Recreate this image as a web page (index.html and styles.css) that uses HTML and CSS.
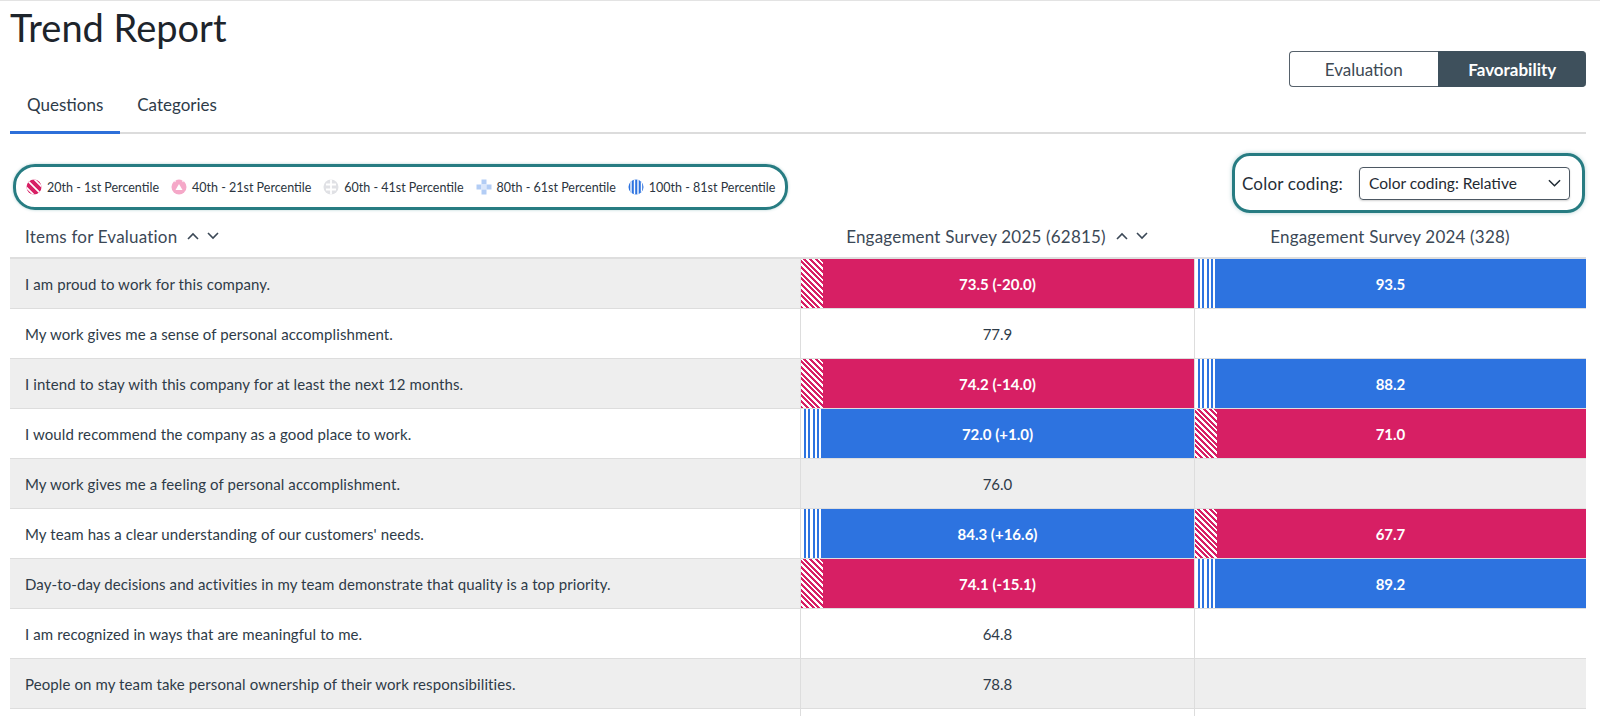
FILE: index.html
```html
<!DOCTYPE html>
<html lang="en">
<head>
<meta charset="utf-8">
<title>Trend Report</title>
<link rel="stylesheet" href="styles.css">
</head>
<body>
<div class="page">
  <h1 class="title">Trend Report</h1>

  <div class="tabbar">
    <nav class="tabs">
      <a class="tab active">Questions</a>
      <a class="tab">Categories</a>
    </nav>
    <div class="toggle">
      <button class="toggle-btn">Evaluation</button>
      <button class="toggle-btn on">Favorability</button>
    </div>
  </div>

  <div class="controls">
    <div class="legend">
      <div class="legend-item">
        <svg class="lg-icon" viewBox="0 0 16 16"><defs><clipPath id="c1"><circle cx="8" cy="8" r="7.5"/></clipPath></defs><g clip-path="url(#c1)"><rect width="16" height="16" fill="#d71f64"/><path d="M-8 8L8 24M-4 4L12 20M0 0L16 16M4 -4L20 12M8 -8L24 8" stroke="#fff" stroke-width="1.7"/></g></svg>
        <span>20th - 1st Percentile</span>
      </div>
      <div class="legend-item">
        <svg class="lg-icon" viewBox="0 0 16 16"><defs><clipPath id="c2"><circle cx="8" cy="8" r="7.5"/></clipPath></defs><g clip-path="url(#c2)"><rect width="16" height="16" fill="#f5a8c8"/><path d="M8 5L11.5 11H4.5Z" fill="#fff"/><path d="M2 0H6L4 3.5ZM10 0H14L12 3.5Z" fill="#fff"/><path d="M1 12L3 16H-1ZM15 12L17 16H13Z" fill="#fff"/></g></svg>
        <span>40th - 21st Percentile</span>
      </div>
      <div class="legend-item">
        <svg class="lg-icon" viewBox="0 0 16 16"><defs><clipPath id="c3"><circle cx="8" cy="8" r="7.5"/></clipPath></defs><g clip-path="url(#c3)"><rect width="16" height="16" fill="#e0e1e5"/><path d="M8 0V16M3 5.5H13M3 10.5H13" stroke="#fff" stroke-width="1.8"/></g></svg>
        <span>60th - 41st Percentile</span>
      </div>
      <div class="legend-item">
        <svg class="lg-icon" viewBox="0 0 16 16"><rect x="5.5" y="0.5" width="5" height="5" fill="#b3cdf5"/><rect x="0.5" y="5.5" width="5" height="5" fill="#b3cdf5"/><rect x="5.5" y="5.5" width="5" height="5" fill="#dbe7fb"/><rect x="10.5" y="5.5" width="5" height="5" fill="#b3cdf5"/><rect x="5.5" y="10.5" width="5" height="5" fill="#b3cdf5"/></svg>
        <span>80th - 61st Percentile</span>
      </div>
      <div class="legend-item">
        <svg class="lg-icon" viewBox="0 0 16 16"><defs><clipPath id="c5"><circle cx="8" cy="8" r="7.5"/></clipPath></defs><g clip-path="url(#c5)"><rect width="16" height="16" fill="#2d73e0"/><path d="M3 0V16M6.5 0V16M10 0V16M13.5 0V16" stroke="#fff" stroke-width="1.4"/></g></svg>
        <span>100th - 81st Percentile</span>
      </div>
    </div>

    <div class="coding">
      <span class="coding-label">Color coding:</span>
      <div class="select">
        <span>Color coding: Relative</span>
        <svg class="select-chev" viewBox="0 0 14 8"><path d="M1 1L7 7L13 1" fill="none" stroke="#1f2a33" stroke-width="1.6"/></svg>
      </div>
    </div>
  </div>

  <div class="table">
    <div class="row head">
      <div class="cell first">
        <span>Items for Evaluation</span>
        <span class="sorts">
          <svg class="chev" viewBox="0 0 12 8"><path d="M1 7L6 2L11 7" fill="none" stroke="#3b4856" stroke-width="1.6"/></svg>
          <svg class="chev" viewBox="0 0 12 8"><path d="M1 1L6 6L11 1" fill="none" stroke="#3b4856" stroke-width="1.6"/></svg>
        </span>
      </div>
      <div class="cell hnum">
        <span>Engagement Survey 2025 (62815)</span>
        <span class="sorts">
          <svg class="chev" viewBox="0 0 12 8"><path d="M1 7L6 2L11 7" fill="none" stroke="#3b4856" stroke-width="1.6"/></svg>
          <svg class="chev" viewBox="0 0 12 8"><path d="M1 1L6 6L11 1" fill="none" stroke="#3b4856" stroke-width="1.6"/></svg>
        </span>
      </div>
      <div class="cell hnum">
        <span>Engagement Survey 2024 (328)</span>
      </div>
    </div>

    <div class="row alt">
      <div class="cell first">I am proud to work for this company.</div>
      <div class="cell num pink">73.5 (-20.0)</div>
      <div class="cell num blue">93.5</div>
    </div>
    <div class="row">
      <div class="cell first">My work gives me a sense of personal accomplishment.</div>
      <div class="cell num">77.9</div>
      <div class="cell num"></div>
    </div>
    <div class="row alt">
      <div class="cell first">I intend to stay with this company for at least the next 12 months.</div>
      <div class="cell num pink">74.2 (-14.0)</div>
      <div class="cell num blue">88.2</div>
    </div>
    <div class="row">
      <div class="cell first">I would recommend the company as a good place to work.</div>
      <div class="cell num blue">72.0 (+1.0)</div>
      <div class="cell num pink">71.0</div>
    </div>
    <div class="row alt">
      <div class="cell first">My work gives me a feeling of personal accomplishment.</div>
      <div class="cell num">76.0</div>
      <div class="cell num"></div>
    </div>
    <div class="row">
      <div class="cell first">My team has a clear understanding of our customers' needs.</div>
      <div class="cell num blue">84.3 (+16.6)</div>
      <div class="cell num pink">67.7</div>
    </div>
    <div class="row alt">
      <div class="cell first">Day-to-day decisions and activities in my team demonstrate that quality is a top priority.</div>
      <div class="cell num pink">74.1 (-15.1)</div>
      <div class="cell num blue">89.2</div>
    </div>
    <div class="row">
      <div class="cell first">I am recognized in ways that are meaningful to me.</div>
      <div class="cell num">64.8</div>
      <div class="cell num"></div>
    </div>
    <div class="row alt">
      <div class="cell first">People on my team take personal ownership of their work responsibilities.</div>
      <div class="cell num">78.8</div>
      <div class="cell num"></div>
    </div>
    <div class="row">
      <div class="cell first"></div>
      <div class="cell num"></div>
      <div class="cell num"></div>
    </div>
  </div>
</div>
</body>
</html>
```

FILE: styles.css
```css
* { box-sizing: border-box; }

html, body {
  margin: 0;
  padding: 0;
  background: #fff;
}

body {
  font-family: Lato, "Open Sans", "Liberation Sans", sans-serif;
  color: #2e3b48;
  overflow: hidden;
}

.page {
  border-top: 1px solid #e3e3e3;
  padding: 0 14px 0 10px;
}

.title {
  margin: 0;
  height: 50px;
  font-size: 38px;
  line-height: 50px;
  font-weight: 400;
  color: #1d242b;
  padding-top: 1px;
}

/* tabs + toggle */
.tabbar {
  display: flex;
  justify-content: space-between;
  align-items: flex-start;
  height: 83px;
  border-bottom: 2px solid #dcdcdc;
}

.tabs {
  display: flex;
  align-self: flex-end;
  margin-bottom: -2px;
}

.tab {
  display: block;
  font-size: 17px;
  line-height: 20px;
  padding: 0 17px 16px;
  border-bottom: 3px solid transparent;
  color: #2e3b48;
}

.tab.active {
  border-bottom-color: #2d6fd9;
}

.toggle {
  display: flex;
  width: 297px;
  height: 36px;
}

.toggle-btn {
  flex: 1;
  font-family: inherit;
  font-size: 17px;
  border: 1px solid #56616b;
  background: #fff;
  color: #3d4954;
  border-radius: 4px 0 0 4px;
  border-right: none;
  padding: 0;
}

.toggle-btn.on {
  background: #3e505c;
  border-color: #3e505c;
  color: #fff;
  font-weight: 700;
  border-radius: 0 4px 4px 0;
}

/* controls */
.controls {
  display: flex;
  justify-content: space-between;
  align-items: flex-start;
  height: 81px;
}

.legend {
  display: flex;
  align-items: center;
  gap: 12px;
  height: 46px;
  margin-top: 30px;
  margin-left: 3px;
  padding: 0 10px;
  border: 3px solid #277c82;
  border-radius: 22px;
  box-shadow: 0 0 3px rgba(39, 124, 130, 0.35);
}

.legend-item {
  display: flex;
  align-items: center;
  gap: 5px;
  font-size: 12.5px;
  color: #2b3540;
  white-space: nowrap;
}

.lg-icon {
  width: 16px;
  height: 16px;
  flex: none;
}

.coding {
  display: flex;
  align-items: center;
  gap: 16px;
  height: 60px;
  margin-top: 19px;
  margin-right: 1px;
  padding: 0 12px 0 7px;
  border: 3px solid #277c82;
  border-radius: 18px;
  box-shadow: 0 0 4px rgba(39, 124, 130, 0.35);
}

.coding-label {
  font-size: 17px;
  letter-spacing: 0.2px;
  color: #262f38;
}

.select {
  display: flex;
  align-items: center;
  justify-content: space-between;
  width: 211px;
  height: 33px;
  padding: 0 8px 0 9px;
  border: 1px solid #4d5863;
  border-radius: 4px;
  box-shadow: 0 1px 2px rgba(0, 0, 0, 0.18);
  font-size: 15.5px;
  color: #1f2a33;
}

.select-chev {
  width: 13px;
  height: 8px;
}

/* table */
.row {
  display: grid;
  grid-template-columns: 790px 394px 1fr;
  height: 50px;
  border-bottom: 1px solid #dddddd;
}

.row.alt {
  background: #eeeeee;
}

.row.head {
  height: 44px;
  border-bottom: 2px solid #dedede;
}

.cell {
  display: flex;
  align-items: center;
  font-size: 15px;
}

.cell.first {
  padding-left: 15px;
  letter-spacing: 0.1px;
  color: #2e3b48;
}

.head .cell {
  font-size: 17px;
  letter-spacing: 0.2px;
  color: #3b4856;
}

.hnum {
  justify-content: center;
}

.sorts {
  display: inline-flex;
  align-items: center;
  gap: 8px;
  margin-left: 10px;
}

.chev {
  width: 12px;
  height: 8px;
}

.num {
  justify-content: center;
  border-left: 1px solid #dddddd;
  color: #2e3b48;
}

.num.pink {
  background:
    repeating-linear-gradient(45deg, #d71f64 0 2px, #ffffff 2px 4px) 0 0 / 22px 100% no-repeat,
    #d71f64;
  color: #fff;
  font-weight: 700;
}

.num.blue {
  background:
    repeating-linear-gradient(90deg, #ffffff 0 2.5px, #2d73e0 2.5px 4.5px) 0 0 / 20px 100% no-repeat,
    #2d73e0;
  color: #fff;
  font-weight: 700;
}
```
